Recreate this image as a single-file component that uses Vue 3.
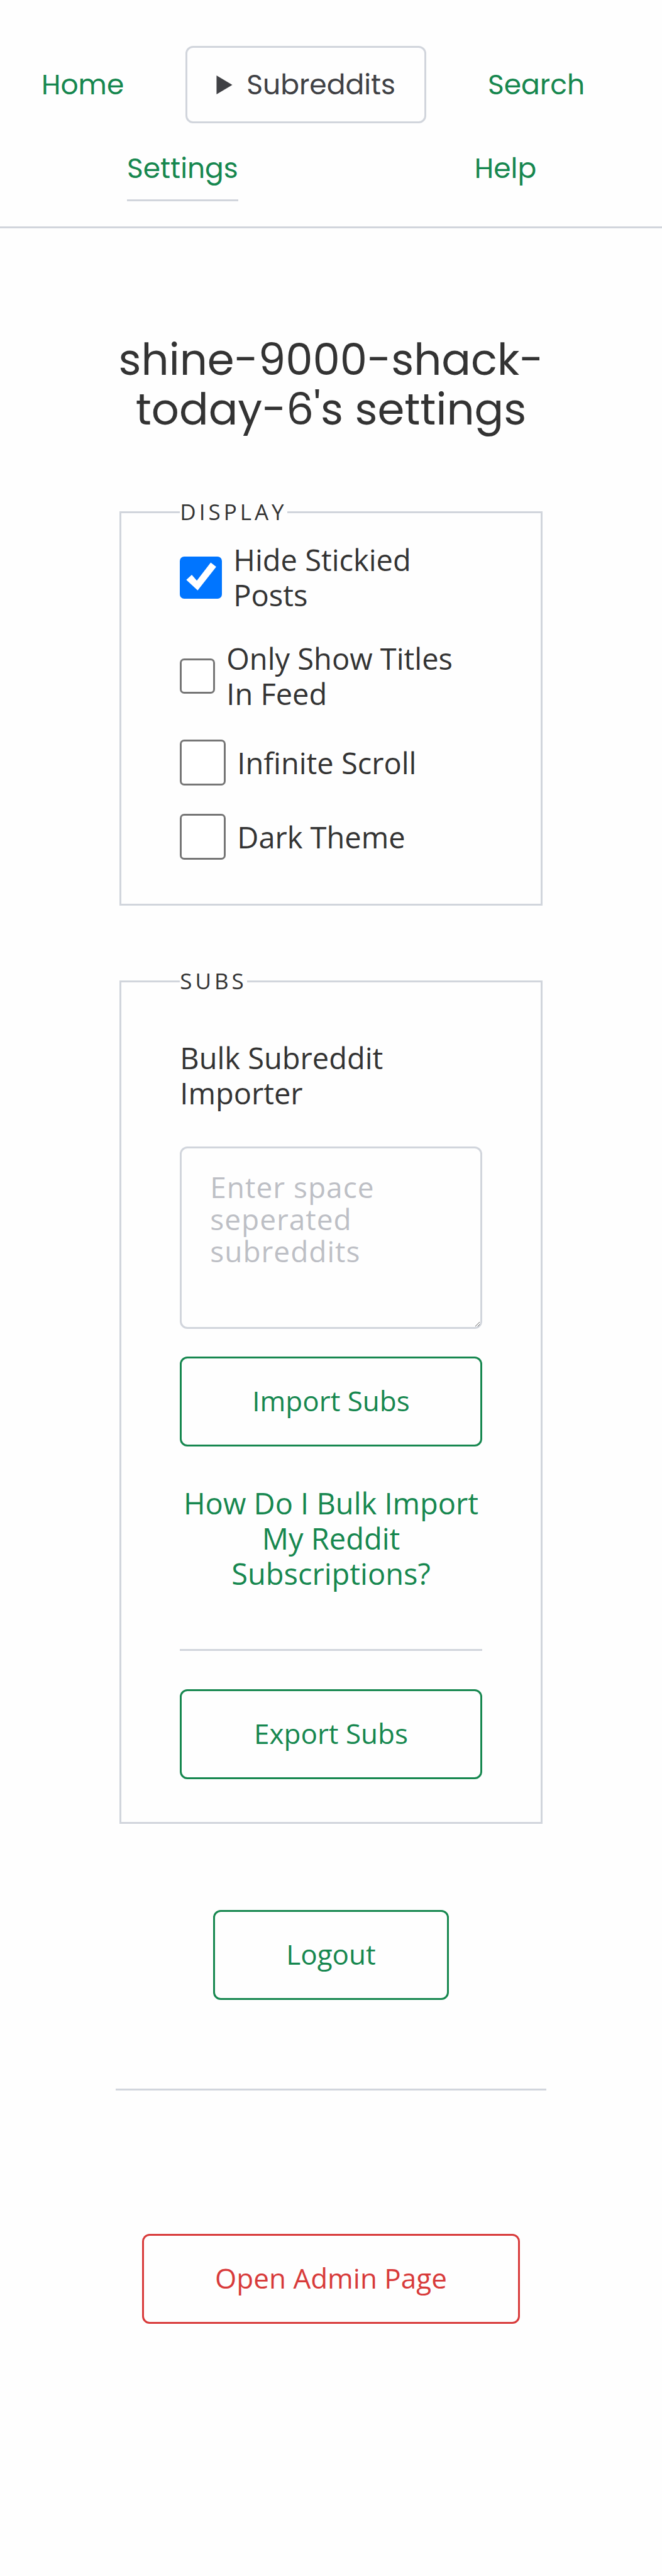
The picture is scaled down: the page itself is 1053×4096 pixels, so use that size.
<script setup>
import { ref } from 'vue'

const options = ref([
  { id: 'hide-stickied', label: 'Hide Stickied Posts', size: 'medium', on: true },
  { id: 'titles-only', label: 'Only Show Titles In Feed', size: 'small', on: false },
  { id: 'infinite-scroll', label: 'Infinite Scroll', size: 'large', on: false },
  { id: 'dark-theme', label: 'Dark Theme', size: 'large', on: false },
])
const subs = ref('')
</script>

<template>
  <div class="page">
    <header class="header">
      <nav class="row row-top">
        <a href="#home">Home</a>
        <details class="subreddits">
          <summary>
            <svg class="marker" viewBox="0 0 26 31" aria-hidden="true"><path d="M0 0L26 15.5L0 31Z" /></svg>
            <span>Subreddits</span>
          </summary>
        </details>
        <a href="#search">Search</a>
      </nav>
      <nav class="row row-bottom">
        <a href="#settings" class="current">Settings</a>
        <a href="#help">Help</a>
      </nav>
    </header>

    <main class="main">
      <h1>shine-9000-shack-today-6's settings</h1>

      <fieldset class="display">
        <legend>DISPLAY</legend>
        <div class="options">
          <label v-for="o in options" :key="o.id" :for="o.id" class="option">
            <input :id="o.id" v-model="o.on" type="checkbox" :class="o.size" />
            <span>{{ o.label }}</span>
          </label>
        </div>
      </fieldset>

      <fieldset class="subs">
        <legend>SUBS</legend>
        <label for="bulk" class="bulk">Bulk Subreddit Importer</label>
        <textarea id="bulk" v-model="subs" placeholder="Enter space seperated subreddits"></textarea>
        <button type="button">Import Subs</button>
        <a href="#bulk-help" class="how">How Do I Bulk Import My Reddit Subscriptions?</a>
        <hr />
        <button type="button">Export Subs</button>
      </fieldset>

      <button type="button" class="logout">Logout</button>
      <hr class="divider" />
      <button type="button" class="admin">Open Admin Page</button>
    </main>
  </div>
</template>

<style>
body {
  margin: 0;
  background: #fefefe;
}
</style>

<style scoped>
.page {
  padding-bottom: 402px;
  color: #333;
  font: 47px/56px "Open Sans", "Noto Sans", sans-serif;
}
a {
  color: #16874f;
  text-decoration: none;
}
.header {
  padding-top: 73px;
  border-bottom: 3px solid #d1d5dc;
  font-family: Poppins, Inter, sans-serif;
  font-size: 44px;
}
.row {
  display: flex;
  align-items: center;
}
.row-top {
  gap: 98px;
  padding-left: 66px;
}
.row-bottom {
  align-items: flex-start;
  gap: 376px;
  padding: 44px 0 40px 202px;
}
.current {
  padding-bottom: 21px;
  border-bottom: 3px solid #d1d5dc;
}
.subreddits {
  color: #404145;
  border: 3px solid #d1d5dc;
  border-radius: 12px;
}
summary {
  display: flex;
  align-items: center;
  gap: 22px;
  padding: 31px 46px 30px;
  line-height: 56px;
  list-style: none;
  cursor: pointer;
}
.marker {
  width: 26px;
  height: 30px;
  fill: currentColor;
}
.main {
  display: flex;
  flex-direction: column;
  align-items: center;
  width: 65%;
  margin: 0 auto;
}
h1 {
  align-self: stretch;
  margin: 170px 0 99px;
  font: 400 69px/79px Poppins, Inter, sans-serif;
  text-align: center;
}
fieldset {
  align-self: stretch;
  min-width: 0;
  margin: 0 6px;
  padding: 0 93px;
  border: 3px solid #d1d5dc;
}
legend {
  padding: 0;
  font-size: 35px;
  line-height: 48px;
  letter-spacing: 5px;
}
.options {
  display: flex;
  flex-direction: column;
  gap: 45px;
  padding: 24px 0 70px;
}
.option {
  display: flex;
  align-items: center;
  gap: 18px;
}
.option input {
  flex: none;
  margin: 0;
  appearance: none;
  border: 3px solid #767676;
  border-radius: 7px;
  background: #fff;
}
.option .small {
  width: 56px;
  height: 56px;
}
.option .medium {
  width: 67px;
  height: 67px;
}
.option .large {
  width: 73px;
  height: 73px;
}
.option input:checked {
  border: 0;
  background: #0075ff;
}
.option input:checked::before {
  content: "";
  display: block;
  height: 100%;
  background: #fff;
  clip-path: polygon(15% 56%, 28% 44%, 40% 58%, 73% 15%, 86% 25%, 42% 81%);
}
.subs {
  margin-top: 96px;
  padding-bottom: 68px;
}
.bulk {
  display: block;
  padding: 70px 0 57px;
}
textarea {
  display: block;
  box-sizing: border-box;
  width: 100%;
  height: 290px;
  margin: 0 0 44px;
  padding: 36px 45px;
  border: 3px solid #d1d5dc;
  border-radius: 12px;
  background: transparent;
  color: inherit;
  font: 46px/51px "Open Sans", "Noto Sans", sans-serif;
  letter-spacing: 1px;
  resize: both;
}
textarea::placeholder {
  color: #bdbfc5;
  opacity: 1;
}
button {
  box-sizing: border-box;
  height: 143px;
  padding: 0 113px 3px;
  border: 3px solid #16874f;
  border-radius: 12px;
  background: transparent;
  color: #16874f;
  font: 44px/56px "Open Sans", "Noto Sans", sans-serif;
  cursor: pointer;
}
.subs button {
  display: block;
  width: 100%;
  padding: 0 0 3px;
}
.how {
  display: block;
  padding: 62px 0 92px;
  text-align: center;
}
hr {
  align-self: stretch;
  margin: 0 0 61px;
  border: 0;
  border-top: 3px solid #d1d5dc;
}
.logout {
  margin: 137px 0 141px;
}
.divider {
  margin-bottom: 228px;
}
.admin {
  border-color: #d83a3a;
  color: #d83a3a;
}
</style>
